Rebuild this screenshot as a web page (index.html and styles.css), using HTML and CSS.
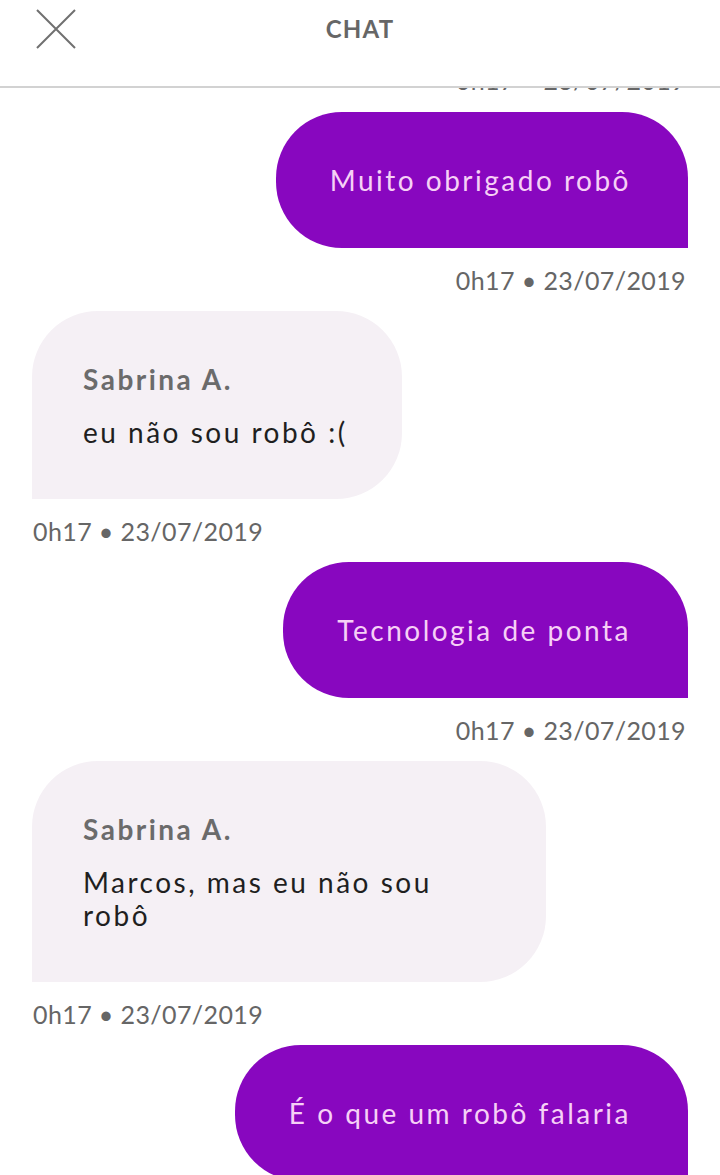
FILE: index.html
```html
<!DOCTYPE html>
<html lang="pt-BR">
<head>
    <meta charset="UTF-8">
    <meta name="viewport" content="width=device-width, initial-scale=1.0">
    <title>Chat</title>
    <link rel="stylesheet" href="styles.css">
</head>
<body>
    <div class="screen">
        <header class="topbar">
            <button class="close" aria-label="Fechar">
                <svg width="40" height="40" viewBox="0 0 40 40">
                    <path d="M1 1 L39 39 M39 1 L1 39" stroke="#707070" stroke-width="2" fill="none"/>
                </svg>
            </button>
            <h1>CHAT</h1>
        </header>
        <main class="thread">
            <p class="stamp stamp-out stamp-first">0h17 • 23/07/2019</p>

            <div class="msg out">
                <div class="bubble">Muito obrigado robô</div>
            </div>
            <p class="stamp stamp-out">0h17 • 23/07/2019</p>

            <div class="msg in">
                <div class="bubble">
                    <div class="author">Sabrina A.</div>
                    <div class="text">eu não sou robô :(</div>
                </div>
            </div>
            <p class="stamp stamp-in">0h17 • 23/07/2019</p>

            <div class="msg out">
                <div class="bubble">Tecnologia de ponta</div>
            </div>
            <p class="stamp stamp-out">0h17 • 23/07/2019</p>

            <div class="msg in">
                <div class="bubble">
                    <div class="author">Sabrina A.</div>
                    <div class="text">Marcos, mas eu não sou robô</div>
                </div>
            </div>
            <p class="stamp stamp-in">0h17 • 23/07/2019</p>

            <div class="msg out">
                <div class="bubble">É o que um robô falaria</div>
            </div>
        </main>
    </div>
</body>
</html>
```

FILE: styles.css
```css
html, body { margin: 0; padding: 0; background: #fff; }
body { font-family: Lato, 'Noto Sans', Arial, sans-serif; width: 720px; height: 1175px; overflow: hidden; }
.screen { display: flex; flex-direction: column; height: 1175px; }
.topbar { position: relative; height: 86px; flex: 0 0 86px; display: flex; align-items: flex-start; justify-content: center; background: #fff; border-bottom: 2px solid #d2d2d2; box-sizing: content-box; z-index: 2; }
.close { position: absolute; left: 36px; top: 9px; width: 40px; height: 40px; padding: 0; border: none; background: none; }
.topbar h1 { margin: 14px 0 0; font-size: 24px; line-height: 30px; font-weight: 700; color: #666; letter-spacing: 1.2px; }
.thread { flex: 1; overflow: hidden; display: flex; flex-direction: column; }
.msg { display: flex; flex-shrink: 0; }
.msg.out { justify-content: flex-end; padding-right: 32px; }
.msg.in { justify-content: flex-start; padding-left: 32px; }
.bubble { max-width: 514px; box-sizing: border-box; font-size: 28px; line-height: 33px; letter-spacing: 2.5px; }
.out .bubble { background: #8807bf; color: #f6d0f6; padding: 52px 57px 51px 54px; border-radius: 66px 66px 0 66px; }
.in .bubble { background: #f5f0f5; color: #1f1f1f; padding: 52px 54px 50px 51px; border-radius: 66px 66px 66px 0; }
.author { font-weight: 700; color: #6b6b6b; margin-bottom: 20px; }
.stamp { margin: 16px 0 15px; font-size: 25px; line-height: 32px; color: #666; letter-spacing: 0.4px; flex-shrink: 0; }
.stamp-out { text-align: right; padding-right: 34px; }
.stamp-in { text-align: left; padding-left: 33px; }
.stamp-first { margin-top: -24px; margin-bottom: 16px; }
```
